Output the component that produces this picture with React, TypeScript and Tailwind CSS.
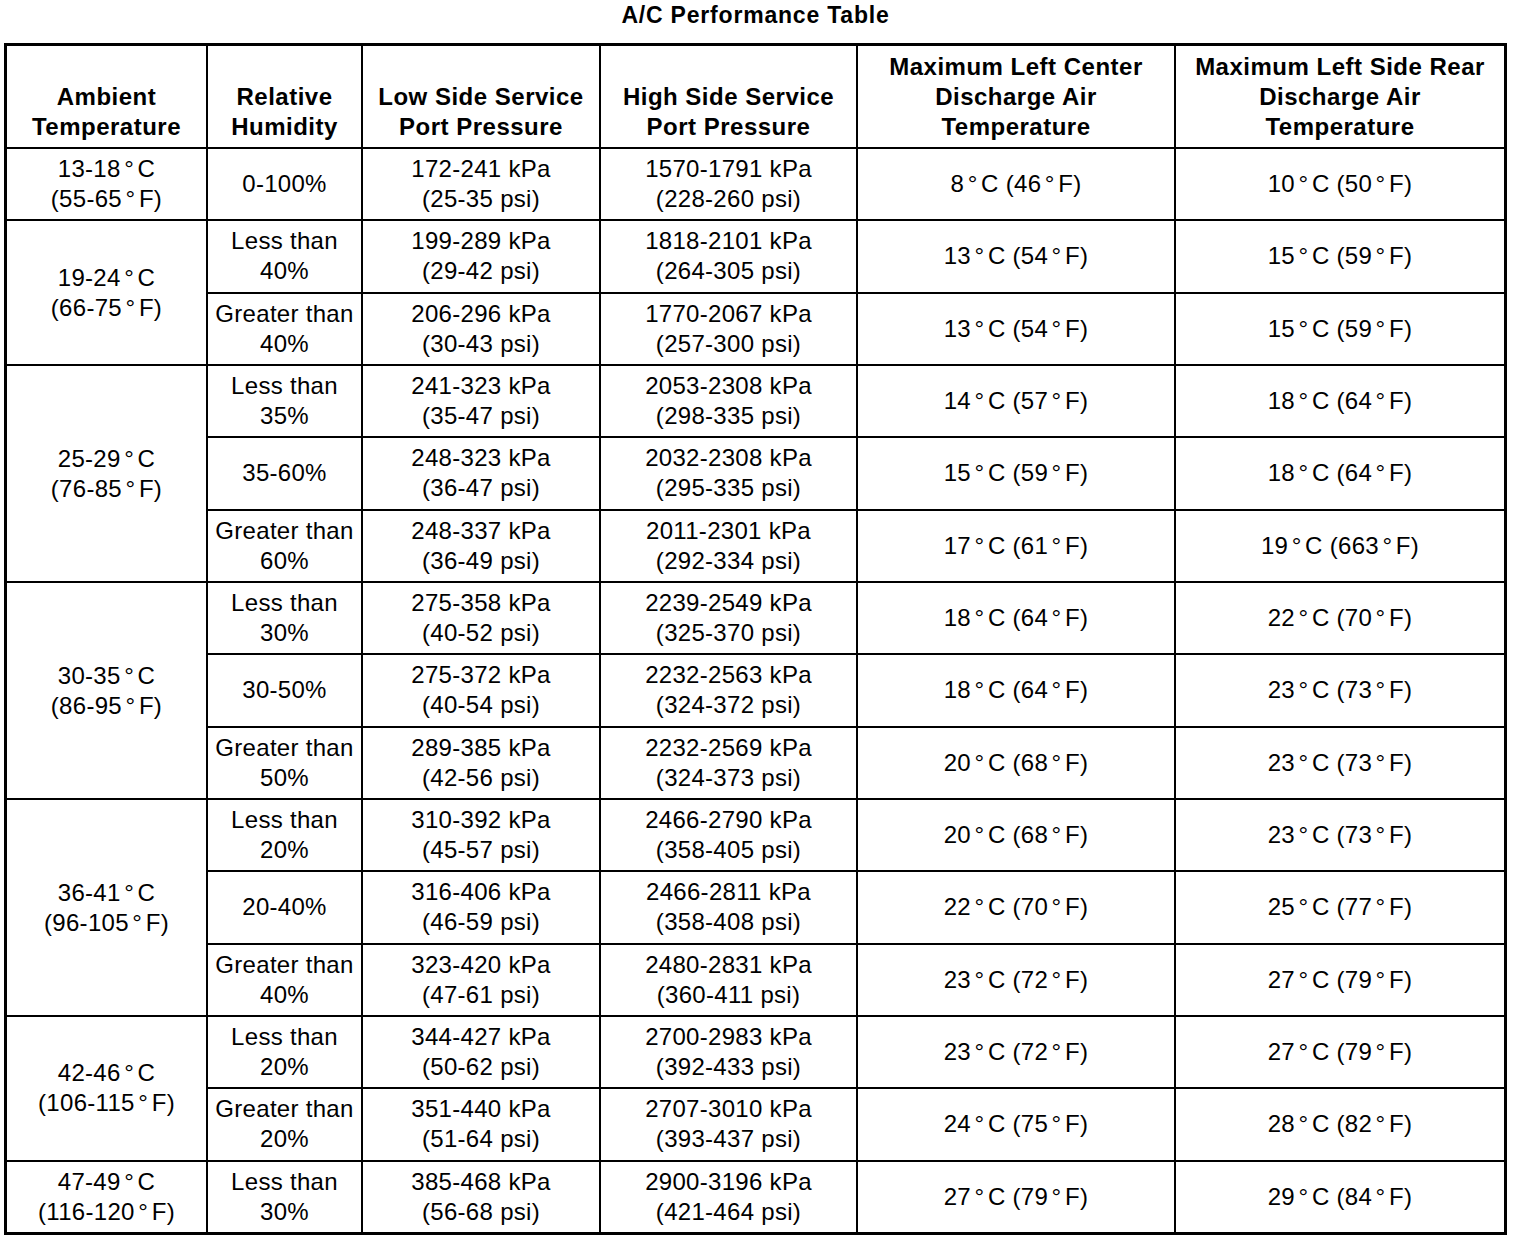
import React from 'react';

type Row = {
  humidity: string[];
  low: string[];
  high: string[];
  center: string;
  rear: string;
};

interface Group {
  temp: string[];
  rows: Row[];
}

const headers: string[][] = [
  ['Ambient', 'Temperature'],
  ['Relative', 'Humidity'],
  ['Low Side Service', 'Port Pressure'],
  ['High Side Service', 'Port Pressure'],
  ['Maximum Left Center', 'Discharge Air', 'Temperature'],
  ['Maximum Left Side Rear', 'Discharge Air', 'Temperature'],
];

const r = (
  humidity: string[],
  low: [string, string],
  high: [string, string],
  center: string,
  rear: string
): Row => ({
  humidity,
  low: [`${low[0]} kPa`, `(${low[1]} psi)`],
  high: [`${high[0]} kPa`, `(${high[1]} psi)`],
  center,
  rear,
});

const groups: Group[] = [
  {
    temp: ['13-18°C', '(55-65°F)'],
    rows: [r(['0-100%'], ['172-241', '25-35'], ['1570-1791', '228-260'], '8°C (46°F)', '10°C (50°F)')],
  },
  {
    temp: ['19-24°C', '(66-75°F)'],
    rows: [
      r(['Less than', '40%'], ['199-289', '29-42'], ['1818-2101', '264-305'], '13°C (54°F)', '15°C (59°F)'),
      r(['Greater than', '40%'], ['206-296', '30-43'], ['1770-2067', '257-300'], '13°C (54°F)', '15°C (59°F)'),
    ],
  },
  {
    temp: ['25-29°C', '(76-85°F)'],
    rows: [
      r(['Less than', '35%'], ['241-323', '35-47'], ['2053-2308', '298-335'], '14°C (57°F)', '18°C (64°F)'),
      r(['35-60%'], ['248-323', '36-47'], ['2032-2308', '295-335'], '15°C (59°F)', '18°C (64°F)'),
      r(['Greater than', '60%'], ['248-337', '36-49'], ['2011-2301', '292-334'], '17°C (61°F)', '19°C (663°F)'),
    ],
  },
  {
    temp: ['30-35°C', '(86-95°F)'],
    rows: [
      r(['Less than', '30%'], ['275-358', '40-52'], ['2239-2549', '325-370'], '18°C (64°F)', '22°C (70°F)'),
      r(['30-50%'], ['275-372', '40-54'], ['2232-2563', '324-372'], '18°C (64°F)', '23°C (73°F)'),
      r(['Greater than', '50%'], ['289-385', '42-56'], ['2232-2569', '324-373'], '20°C (68°F)', '23°C (73°F)'),
    ],
  },
  {
    temp: ['36-41°C', '(96-105°F)'],
    rows: [
      r(['Less than', '20%'], ['310-392', '45-57'], ['2466-2790', '358-405'], '20°C (68°F)', '23°C (73°F)'),
      r(['20-40%'], ['316-406', '46-59'], ['2466-2811', '358-408'], '22°C (70°F)', '25°C (77°F)'),
      r(['Greater than', '40%'], ['323-420', '47-61'], ['2480-2831', '360-411'], '23°C (72°F)', '27°C (79°F)'),
    ],
  },
  {
    temp: ['42-46°C', '(106-115°F)'],
    rows: [
      r(['Less than', '20%'], ['344-427', '50-62'], ['2700-2983', '392-433'], '23°C (72°F)', '27°C (79°F)'),
      r(['Greater than', '20%'], ['351-440', '51-64'], ['2707-3010', '393-437'], '24°C (75°F)', '28°C (82°F)'),
    ],
  },
  {
    temp: ['47-49°C', '(116-120°F)'],
    rows: [r(['Less than', '30%'], ['385-468', '56-68'], ['2900-3196', '421-464'], '27°C (79°F)', '29°C (84°F)')],
  },
];

const spans: Record<number, string> = {
  1: 'row-span-1',
  2: 'row-span-2',
  3: 'row-span-3',
};

// degree signs get a little air on both sides, as in the print
function Deg({ text }: { text: string }) {
  const parts = text.split('°');
  return (
    <>
      {parts.map((p, i) => (
        <React.Fragment key={i}>
          {p}
          {i < parts.length - 1 && <span className="mx-[3.5px]">°</span>}
        </React.Fragment>
      ))}
    </>
  );
}

function Cell({ lines, className = '' }: { lines: string[]; className?: string }) {
  return (
    <div className={`bg-white flex flex-col items-center justify-center text-center ${className}`}>
      {lines.map((l, i) => (
        <div key={i} className="whitespace-nowrap">
          <Deg text={l} />
        </div>
      ))}
    </div>
  );
}

export default function App() {
  return (
    <div className="bg-white min-h-[1240px] font-['Liberation_Sans',Arial,sans-serif] text-black">
      <div className="ml-[4px] w-[1503px]">
        {/* Title */}
        <div className="h-[43px] pt-[1px] text-center text-[23px] leading-[28px] font-bold tracking-[0.8px]">
          A/C Performance Table
        </div>

        {/* Table */}
        <div className="h-[1192px] border-[3px] border-black bg-black grid grid-cols-[199px_153px_236px_255px_316px_328px] grid-rows-[101px_repeat(15,1fr)] gap-[2px] text-[24px] leading-[30px] tracking-[0.3px]">
          {headers.map((h, i) => (
            <div
              key={i}
              className="bg-white flex flex-col items-center justify-end pb-[5px] text-center font-bold tracking-[0.5px]"
            >
              {h.map((l) => (
                <div key={l} className="whitespace-nowrap">
                  {l}
                </div>
              ))}
            </div>
          ))}

          {groups.map((g, gi) => (
            <React.Fragment key={gi}>
              <Cell lines={g.temp} className={`col-start-1 ${spans[g.rows.length]}`} />
              {g.rows.map((row, ri) => (
                <React.Fragment key={ri}>
                  <Cell lines={row.humidity} className="col-start-2" />
                  <Cell lines={row.low} />
                  <Cell lines={row.high} />
                  <Cell lines={[row.center]} />
                  <Cell lines={[row.rear]} />
                </React.Fragment>
              ))}
            </React.Fragment>
          ))}
        </div>
      </div>
    </div>
  );
}
